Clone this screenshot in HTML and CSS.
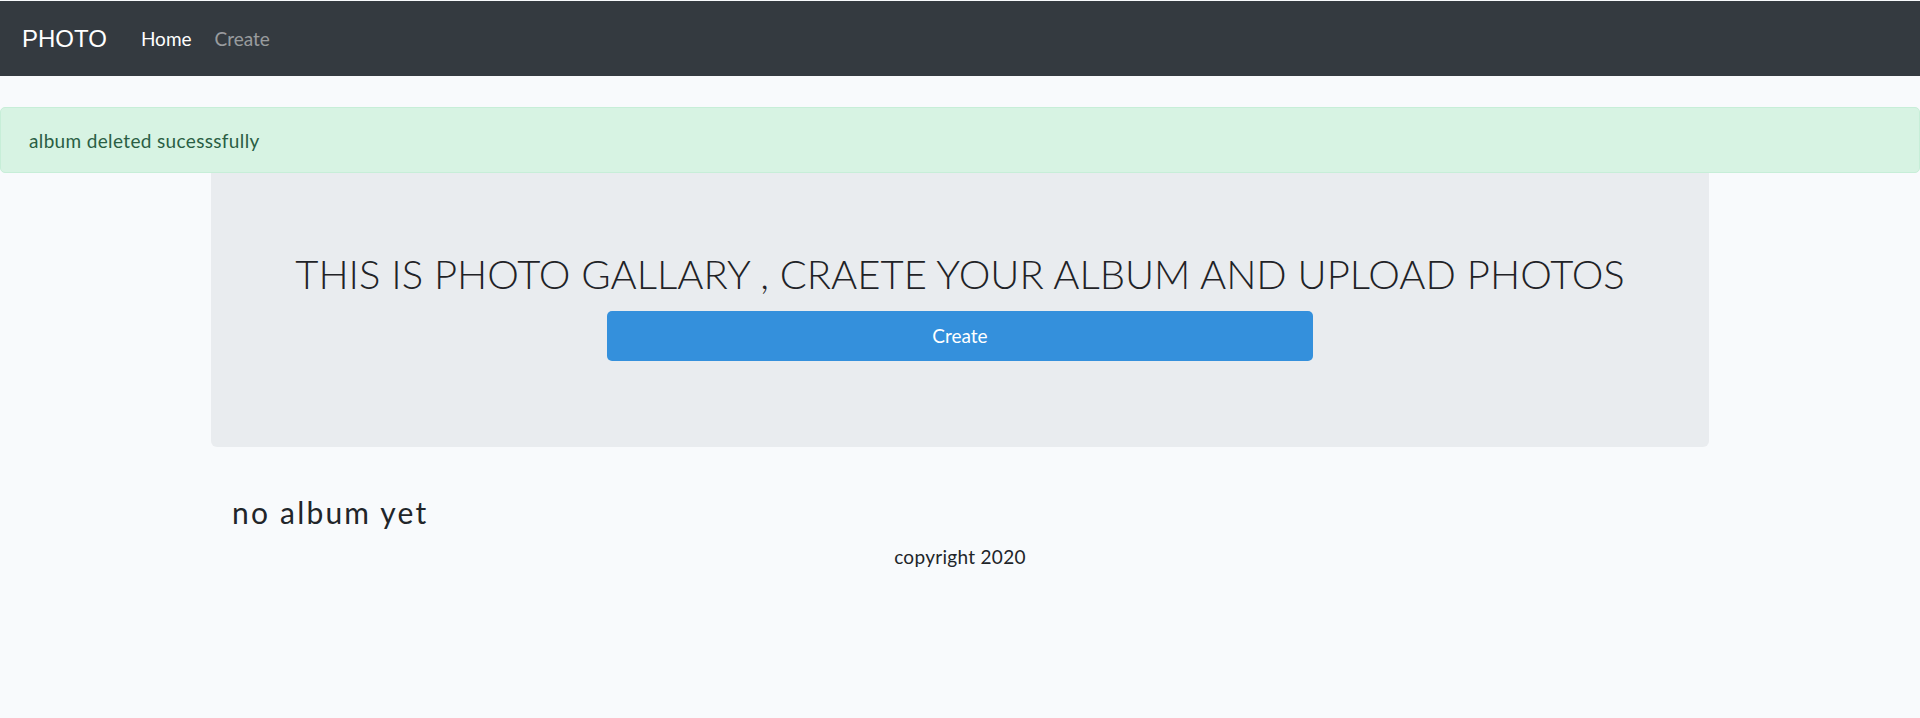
FILE: index.html
```html
<!DOCTYPE html>
<html lang="en">
<head>
<meta charset="utf-8">
<title>Photo Gallery</title>
<link rel="stylesheet" href="styles.css">
</head>
<body>
<nav class="navbar">
  <a class="brand" href="#">PHOTO</a>
  <ul class="nav-links">
    <li><a class="nav-link active" href="#">Home</a></li>
    <li><a class="nav-link" href="#">Create</a></li>
  </ul>
</nav>
<main class="main">
  <div class="alert">album deleted sucesssfully</div>
  <div class="container">
    <section class="jumbotron">
      <h1 class="display">THIS IS PHOTO GALLARY , CRAETE YOUR ALBUM AND UPLOAD PHOTOS</h1>
      <a class="btn" href="#">Create</a>
    </section>
    <h3 class="empty">no album yet</h3>
  </div>
</main>
<footer class="footer">copyright 2020</footer>
</body>
</html>
```
FILE: styles.css
```css
* { box-sizing: border-box; }
html, body { margin: 0; }
body {
  background: #f8fafc;
  color: #212529;
  font-family: Lato, "Open Sans", sans-serif;
  padding-top: 1px;
}
a { text-decoration: none; }

.navbar {
  display: flex;
  align-items: center;
  height: 75px;
  padding: 0 22px;
  background: #343a40;
}
.brand {
  font-family: "Liberation Sans", Arial, sans-serif;
  font-size: 24px;
  color: #fff;
  margin-right: 34px;
}
.nav-links {
  display: flex;
  gap: 23px;
  list-style: none;
  margin: 0;
  padding: 0;
}
.nav-link {
  font-size: 19px;
  color: rgba(255, 255, 255, 0.5);
}
.nav-link.active { color: #fff; }

.main { padding-top: 31px; }

.alert {
  display: flex;
  align-items: center;
  height: 66px;
  padding: 0 28px;
  background: #d7f3e3;
  border: 1px solid #c7eed8;
  border-radius: 5px;
  color: #2a5e44;
  font-size: 19px;
  letter-spacing: 0.35px;
}

.container {
  width: 1498px;
  margin: 0 auto;
}
.jumbotron {
  background: #e9ecef;
  border-radius: 0 0 6px 6px;
  padding: 77px 40px 86px;
  text-align: center;
}
.display {
  margin: 0;
  font-size: 40px;
  font-weight: 300;
  line-height: 48px;
  color: #1f2327;
}
.btn {
  display: block;
  width: 706px;
  height: 50px;
  margin: 13px auto 0;
  background: #3490dc;
  border-radius: 5px;
  color: #fff;
  font-size: 19px;
  line-height: 50px;
}
.empty {
  margin: 47px 0 0 21px;
  font-size: 30px;
  font-weight: 400;
  line-height: 36px;
  letter-spacing: 2.2px;
}
.footer {
  margin-top: 15px;
  text-align: center;
  font-size: 19px;
  letter-spacing: 0.3px;
}
```
